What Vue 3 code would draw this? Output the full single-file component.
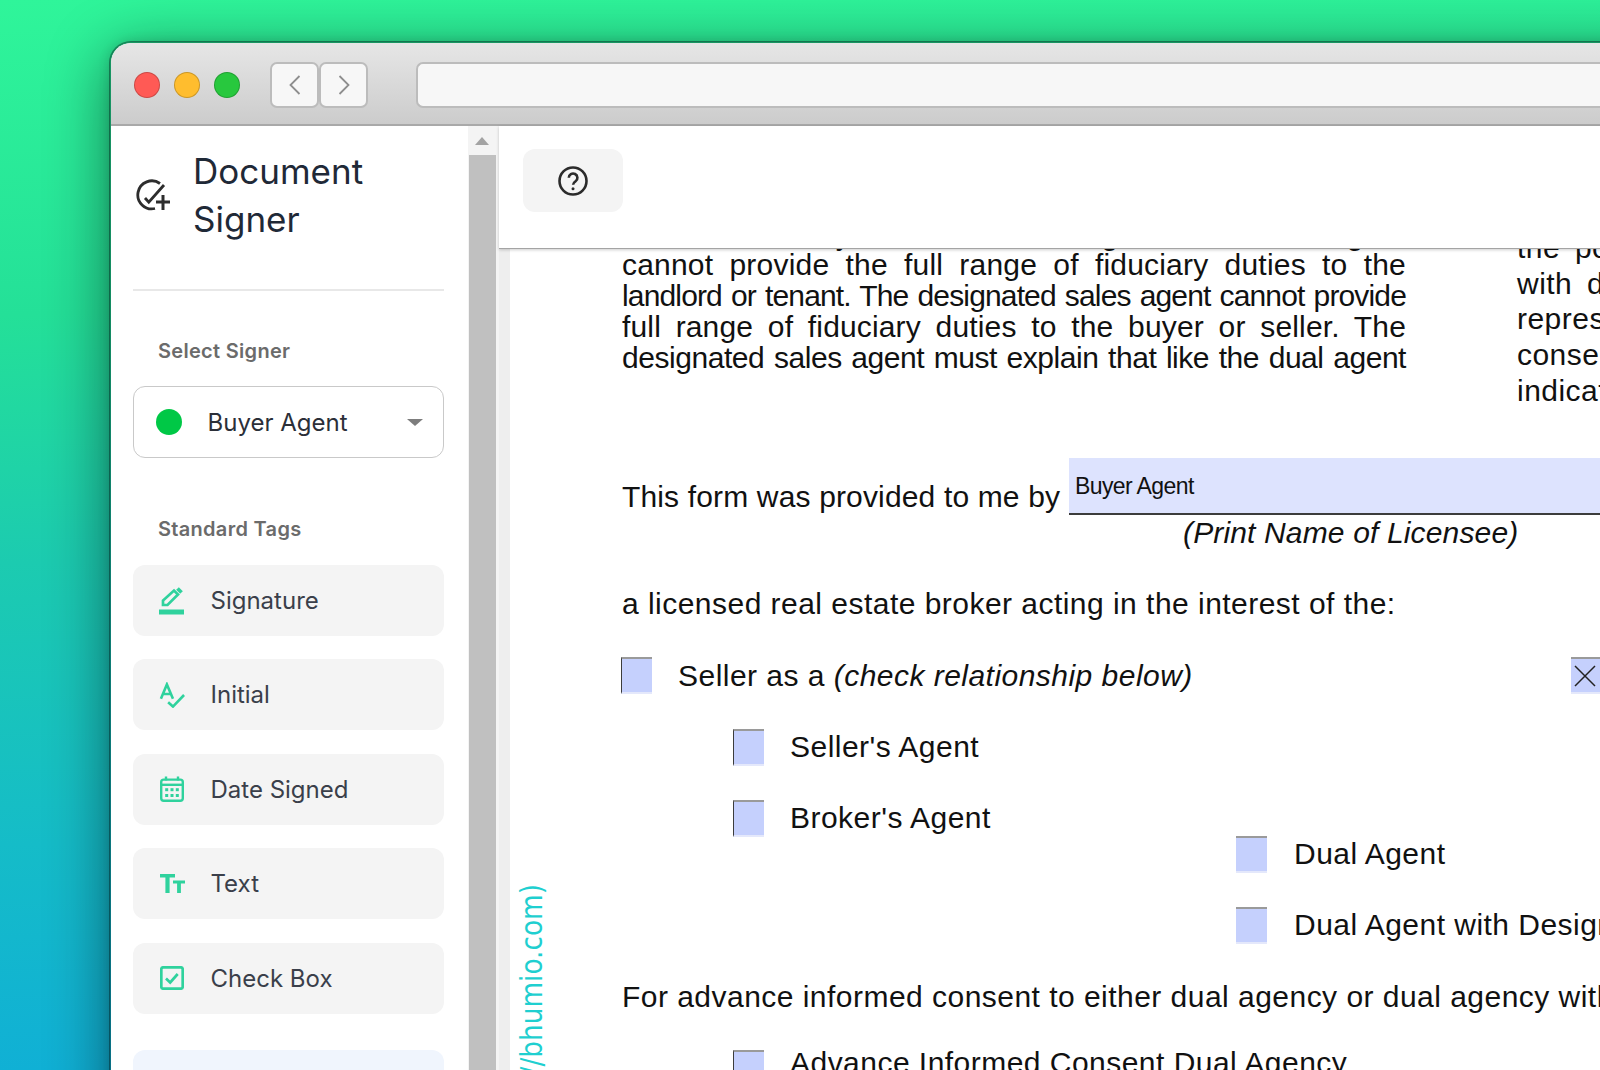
<script setup>
const ox = 499
const oy = 126
const place = (x, cy, ls, ws) => ({
  left: x - ox + 'px',
  top: cy - 20 - oy + 'px',
  letterSpacing: ls === undefined ? undefined : ls + 'px',
  wordSpacing: ws === undefined ? undefined : ws + 'px'
})

const tags = [
  { name: 'Signature', icon: 'sign' },
  { name: 'Initial', icon: 'initial' },
  { name: 'Date Signed', icon: 'date' },
  { name: 'Text', icon: 'text' },
  { name: 'Check Box', icon: 'check' }
]

const para = [
  { t: 'same broker any licensee on the legal side and the agent', cy: 234.5, ls: 0.2 },
  { t: 'cannot provide the full range of fiduciary duties to the', cy: 264.5, ls: 0.2 },
  { t: 'landlord or tenant. The designated sales agent cannot provide', cy: 296, ls: -0.85, ws: -3 },
  { t: 'full range of fiduciary duties to the buyer or seller. The', cy: 327, ls: 0.15 },
  { t: 'designated sales agent must explain that like the dual agent', cy: 358, ls: -0.45 }
]

const side = [
  { t: 'the potential', cy: 248 },
  { t: 'with dual', cy: 284 },
  { t: 'representation', cy: 319 },
  { t: 'consent', cy: 355 },
  { t: 'indicate', cy: 391 }
]

const lines = [
  { t: 'This form was provided to me by', x: 622, cy: 497, ls: 0.15 },
  { t: 'a licensed real estate broker acting in the interest of the:', x: 622, cy: 604 },
  { t: "Seller's Agent", x: 790, cy: 747 },
  { t: "Broker's Agent", x: 790, cy: 818 },
  { t: 'Dual Agent', x: 1294, cy: 854 },
  { t: 'Dual Agent with Designated Sales Agent', x: 1294, cy: 925 },
  { t: 'For advance informed consent to either dual agency or dual agency with designated sales agents', x: 622, cy: 997 },
  { t: 'Advance Informed Consent Dual Agency', x: 790, cy: 1063 }
]

const boxes = [
  { x: 621, y: 657, edge: true },
  { x: 733, y: 729, edge: true },
  { x: 733, y: 800, edge: true },
  { x: 1236, y: 836, edge: false },
  { x: 1236, y: 907, edge: false },
  { x: 733, y: 1050, edge: true }
]
</script>

<template>
  <div class="stage">
    <div class="window">
      <header class="titlebar">
        <div class="lights">
          <span class="light red"></span>
          <span class="light amber"></span>
          <span class="light green"></span>
        </div>
        <div class="nav">
          <button class="nav-btn" type="button" aria-label="Back">
            <svg width="14" height="24" viewBox="0 0 14 24"><path d="M11.5 3 2.5 12l9 9" /></svg>
          </button>
          <button class="nav-btn" type="button" aria-label="Forward">
            <svg width="14" height="24" viewBox="0 0 14 24"><path d="M2.5 3l9 9-9 9" /></svg>
          </button>
        </div>
        <div class="url"></div>
      </header>

      <div class="body">
        <aside class="sidebar">
          <div class="brand">
            <svg class="brand-icon" width="36" height="34" viewBox="0 0 36 34" fill="none">
              <path d="M25 5.500A14 14 0 1 0 20 30.500" />
              <path d="M10 20l3.800 4.200L29 7" />
              <path class="brand-plus" d="M28 17v15M21 24h14" />
            </svg>
            <h1 class="brand-title">Document Signer</h1>
          </div>
          <div class="rule"></div>

          <div class="label signer-label">Select Signer</div>
          <div class="select">
            <span class="dot"></span>
            <span class="select-text">Buyer Agent</span>
            <span class="caret"></span>
          </div>

          <div class="label tags-label">Standard Tags</div>
          <div class="tags">
            <div v-for="tag in tags" :key="tag.name" class="tag">
              <span class="tag-icon">
                <svg v-if="tag.icon === 'sign'" width="26" height="30" viewBox="0 0 26 30">
                  <rect x="0" y="24.5" width="25" height="5" class="fill" />
                  <path d="M4 20v-4.500L15 5.500l4 4L8.500 20z" class="line line-heavy" />
                  <path d="M18.500 3.500l4 4" class="line line-cap" />
                </svg>
                <svg v-else-if="tag.icon === 'initial'" width="27" height="26" viewBox="0 0 27 26">
                  <path d="M2 17 8.200 2 14.500 17M4 12h8.500" class="line line-heavy" />
                  <path d="M9.500 20.500l5 4.500L26 13" class="line line-heavy" />
                </svg>
                <svg v-else-if="tag.icon === 'date'" width="24" height="26" viewBox="0 0 24 26">
                  <rect x="1.200" y="3.600" width="21.600" height="21.200" rx="2.500" class="line" />
                  <path d="M1.200 8.800h21.600" class="line" />
                  <path d="M6 0.500v4M18 0.500v4" class="line" />
                  <g class="fill">
                    <rect x="5.200" y="12.200" width="3" height="3" /><rect x="10.500" y="12.200" width="3" height="3" /><rect x="15.800" y="12.200" width="3" height="3" />
                    <rect x="5.200" y="18" width="3" height="3" /><rect x="10.500" y="18" width="3" height="3" /><rect x="15.800" y="18" width="3" height="3" />
                  </g>
                </svg>
                <svg v-else-if="tag.icon === 'text'" width="25" height="20" viewBox="0 0 25 20">
                  <path d="M0 0h15v3.600H9.600V19H5.400V3.600H0z" class="fill" />
                  <path d="M13 6.500h12v3h-4.100V19h-3.800V9.500H13z" class="fill" />
                </svg>
                <svg v-else width="24" height="24" viewBox="0 0 24 24">
                  <rect x="1.300" y="1.300" width="21.400" height="21.400" rx="2" class="line line-heavy" />
                  <path d="M6 12.500l4.200 4 7.500-8.500" class="line line-heavy" />
                </svg>
              </span>
              <span class="tag-name">{{ tag.name }}</span>
            </div>
          </div>
          <div class="tag tag-blue"></div>
        </aside>

        <div class="scrollbar">
          <span class="scroll-arrow"></span>
          <span class="scroll-thumb"></span>
        </div>

        <main class="doc">
          <div class="toolbar">
            <button class="help" type="button" aria-label="Help">
              <svg width="30" height="30" viewBox="0 0 30 30" fill="none">
                <circle cx="15" cy="15" r="13.500" />
                <path d="M10.800 11.800a4.300 4.300 0 1 1 6.800 3.500c-1.600 1.100-2.500 1.900-2.500 3.500" />
                <circle cx="15" cy="22.800" r="1.500" class="help-dot" />
              </svg>
            </button>
          </div>

          <div class="canvas">
            <div class="gutter"></div>
            <p v-for="l in para" :key="l.t" class="pdf pdf-just" :style="place(622, l.cy, l.ls, l.ws)">{{ l.t }}</p>
            <p v-for="l in side" :key="l.t" class="pdf pdf-side" :style="place(1517, l.cy)">{{ l.t }}</p>
            <p v-for="l in lines" :key="l.t" class="pdf" :style="place(l.x, l.cy, l.ls)">{{ l.t }}</p>
            <p class="pdf pdf-it" :style="place(1183, 533, 0.15)">(Print Name of Licensee)</p>
            <p class="pdf" :style="place(678, 676)">Seller as a <em class="pdf-em">(check relationship below)</em></p>

            <div class="field" :style="place(1069, 478)"><span>Buyer Agent</span></div>

            <span
              v-for="b in boxes"
              :key="b.x + '-' + b.y"
              class="box"
              :class="{ 'box-edge': b.edge }"
              :style="place(b.x, b.y + 20)"
            ></span>
            <span class="box box-x" :style="place(1571, 677)">
              <svg width="29" height="37" viewBox="0 0 29 37"><path d="M4 9l20 20M24 9 4 29" /></svg>
            </span>

            <div class="watermark" :style="place(531.5, 884)"><span>Document (https://bhumio.com)</span></div>
          </div>
        </main>
      </div>
    </div>
  </div>
</template>

<style>
html, body { margin: 0; background: #1fd98a; }
</style>

<style scoped>
.stage {
  width: 1600px;
  height: 1070px;
  overflow: hidden;
  box-sizing: border-box;
  padding: 41px 0 0 109px;
  background: linear-gradient(178deg, #2ff59a 0%, #24e098 28%, #1ccbb0 50%, #15bcc8 75%, #0fadd8 100%);
  font-family: Inter, "Liberation Sans", sans-serif;
}
.window {
  width: 1600px;
  height: 1200px;
  box-sizing: border-box;
  border: 2px solid rgba(0, 25, 25, 0.42);
  border-right: 0;
  border-bottom: 0;
  border-top-left-radius: 22px;
  overflow: hidden;
  background: #fff;
  background-clip: padding-box;
  box-shadow: 0 12px 62px rgba(0, 0, 0, 0.48), 0 0 12px rgba(0, 0, 0, 0.12);
  display: flex;
  flex-direction: column;
}
.titlebar {
  height: 83px;
  flex: none;
  box-sizing: border-box;
  border-bottom: 2px solid #a9a9a9;
  background: linear-gradient(180deg, #e6e6e6, #cccccc);
  display: flex;
  align-items: center;
  padding: 3px 0 0 23px;
}
.lights { display: flex; gap: 14px; }
.light {
  width: 26px;
  height: 26px;
  box-sizing: border-box;
  border-radius: 50%;
  border: 1px solid rgba(0, 0, 0, 0.2);
}
.red { background: #ff5a55; }
.amber { background: #ffbd2e; }
.green { background: #28c83e; }
.nav { display: flex; margin-left: 30px; }
.nav-btn {
  width: 49px;
  height: 46px;
  padding: 0;
  box-sizing: border-box;
  background: #f7f7f7;
  border: 2px solid #bcbcbc;
  border-radius: 7px;
  display: flex;
  align-items: center;
  justify-content: center;
}
.nav-btn svg path { fill: none; stroke: #8e8e8e; stroke-width: 1.8; }
.url {
  flex: 1;
  height: 46px;
  margin-left: 48px;
  box-sizing: border-box;
  background: #f7f7f7;
  border: 2px solid #bcbcbc;
  border-right: 0;
  border-radius: 7px 0 0 7px;
}
.body { flex: 1; display: flex; min-height: 0; }

.sidebar {
  width: 357px;
  flex: none;
  box-sizing: border-box;
  padding: 21px 24px 0 22px;
  background: #fff;
}
.brand { display: flex; align-items: center; height: 96px; padding-left: 2px; }
.brand-icon { flex: none; stroke: #2d2d2d; stroke-width: 2.8; margin-right: 22px; margin-top: 0; }
.brand-plus { stroke-width: 3; }
.brand-title {
  margin: 0;
  width: 200px;
  font-size: 35px;
  font-weight: 400;
  line-height: 48px;
  color: #1f2937;
}
.rule { height: 2px; background: #e8e8e8; margin-top: 46px; }
.label {
  font-size: 20px;
  font-weight: 600;
  letter-spacing: 0.3px;
  line-height: 24px;
  color: #6b6b6b;
  padding-left: 25px;
}
.signer-label { margin-top: 47.5px; }
.select {
  height: 72px;
  margin-top: 23.5px;
  box-sizing: border-box;
  border: 1.5px solid #c9c9c9;
  border-radius: 12px;
  display: flex;
  align-items: center;
  padding: 0 20px 0 22px;
}
.dot { width: 26px; height: 26px; border-radius: 50%; background: #00c846; flex: none; }
.select-text { flex: 1; margin-left: 25.5px; font-size: 24px; color: #2b2f38; }
.caret {
  width: 0;
  height: 0;
  border-left: 8px solid transparent;
  border-right: 8px solid transparent;
  border-top: 7px solid #7d7d7d;
}
.tags-label { margin-top: 59px; }
.tags { display: flex; flex-direction: column; gap: 23.5px; margin-top: 23.5px; }
.tag {
  height: 71px;
  box-sizing: border-box;
  background: #f4f4f4;
  border-radius: 12px;
  display: flex;
  align-items: center;
  padding-left: 26px;
}
.tag-blue { background: #f0f5fd; margin-top: 36px; }
.tag-icon { width: 26px; height: 30px; display: flex; align-items: center; justify-content: center; flex: none; }
.tag-name { margin-left: 25.5px; font-size: 24px; color: #3a3f4a; }
.fill { fill: #2fd29d; }
.line { fill: none; stroke: #2fd29d; stroke-width: 2.4; }
.line-heavy { stroke-width: 2.7; }
.line-cap { stroke-width: 3.8; }

.scrollbar {
  width: 31px;
  flex: none;
  box-sizing: border-box;
  background: #f4f4f4;
  padding-top: 11px;
  display: flex;
  flex-direction: column;
  align-items: flex-start;
}
.scroll-arrow {
  width: 0;
  height: 0;
  border-left: 7px solid transparent;
  border-right: 7px solid transparent;
  border-bottom: 8px solid #a3a3a3;
  margin-left: 7px;
}
.scroll-thumb { width: 27px; height: 1000px; background: #c0c0c0; margin-top: 10px; margin-left: 1px; }

.doc { flex: 1; position: relative; min-width: 0; display: flex; flex-direction: column; }
.toolbar {
  height: 122.5px;
  flex: none;
  position: relative;
  z-index: 2;
  box-sizing: border-box;
  background: #fff;
  border-bottom: 1px solid #a4a4a4;
  box-shadow: 0 1px 3px rgba(0, 0, 0, 0.2);
  padding: 23px 0 0 24px;
}
.help {
  width: 100px;
  height: 63px;
  padding: 0;
  border: 0;
  background: #f4f4f4;
  border-radius: 12px;
  display: flex;
  align-items: center;
  justify-content: center;
}
.help svg { stroke: #2b2b2b; stroke-width: 2.6; }
.help-dot { fill: #2b2b2b; stroke: none; }

.canvas { position: absolute; inset: 0; overflow: hidden; background: #fff; }
.gutter { position: absolute; left: 0; top: 0; bottom: 0; width: 11px; background: #eeeeee; }
.pdf {
  position: absolute;
  margin: 0;
  height: 40px;
  line-height: 40px;
  white-space: nowrap;
  font-family: "Liberation Sans", Arial, sans-serif;
  font-size: 30px;
  letter-spacing: 0.47px;
  color: #111;
}
.pdf-just {
  width: 784px;
  white-space: normal;
  text-align: justify;
  text-align-last: justify;
}
.pdf-side { word-spacing: 6px; }
.pdf-it { font-style: italic; }
.pdf-em { font-style: italic; }
.field {
  position: absolute;
  width: 700px;
  height: 57px;
  box-sizing: border-box;
  background: #dde3fe;
  border-bottom: 2px solid #3c3c3c;
  padding: 8px 0 0 6px;
  font-family: "Liberation Sans", Arial, sans-serif;
  font-size: 23px;
  letter-spacing: -0.6px;
  line-height: 40px;
  color: #111;
}
.box {
  position: absolute;
  width: 31px;
  height: 37px;
  box-sizing: border-box;
  background: #c5d0fd;
  border-top: 2px solid #9a9a9a;
  border-bottom: 2px solid #e4e8fb;
}
.box-edge { border-left: 1px solid #3c3c3c; }
.box-x { overflow: hidden; }
.box-x svg { display: block; margin-top: -2px; }
.box-x path { fill: none; stroke: #222; stroke-width: 1.5; }
.watermark {
  position: absolute;
  width: 0;
  height: 0;
}
.watermark span {
  position: absolute;
  right: 0;
  top: 20px;
  transform-origin: top right;
  transform: rotate(-90deg) translateY(-18px) scaleX(0.85);
  white-space: nowrap;
  font-family: "DejaVu Sans", sans-serif;
  font-size: 31px;
  line-height: 36px;
  color: #1fcfd0;
}
</style>
